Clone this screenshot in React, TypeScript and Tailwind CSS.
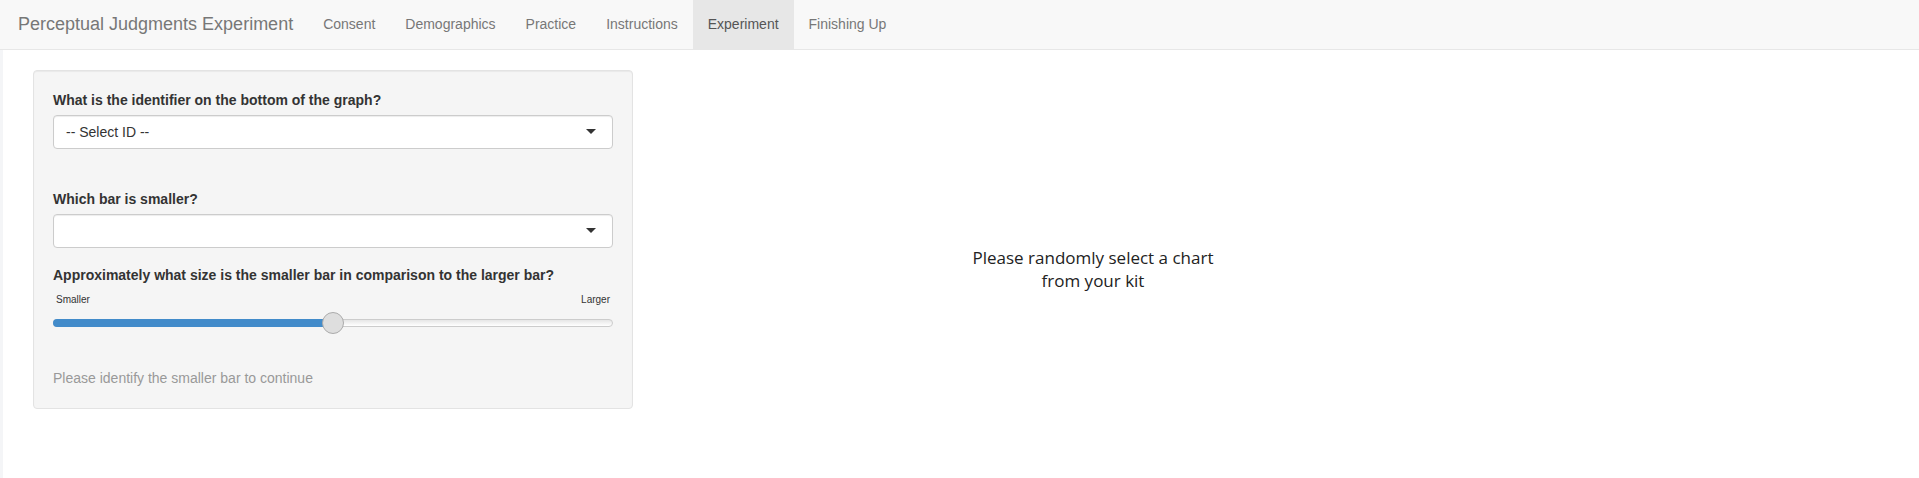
const navItems = ['Consent', 'Demographics', 'Practice', 'Instructions', 'Experiment', 'Finishing Up']

function SelectBox({ value }: { value?: string }) {
    return (
        <div className="relative flex h-[34px] w-full items-center rounded-[4px] border border-[#cccccc] bg-white pl-[12px] text-[14px] text-[#333333] shadow-[inset_0_1px_1px_rgba(0,0,0,0.075)]">
            <span>{value}</span>
            <span className="absolute right-[16px] top-[13px] h-0 w-0 border-x-[5px] border-t-[5px] border-x-transparent border-t-[#333333]"></span>
        </div>
    )
}

export default function App() {
    return (
        <div className="flex min-h-[478px] flex-col bg-white font-['Liberation_Sans',Arial,sans-serif] text-[14px] text-[#333333]">
            <nav className="flex h-[50px] items-stretch border-b border-[#e7e7e7] bg-[#f8f8f8] pl-[3px]">
                <a className="flex h-[49px] items-center pl-[15px] pr-[15px] text-[18px] text-[#777777]">Perceptual Judgments Experiment</a>
                {navItems.map((item) => (
                    <a
                        key={item}
                        className={
                            item === 'Experiment'
                                ? 'flex h-[49px] items-center bg-[#e7e7e7] px-[15px] text-[#555555]'
                                : 'flex h-[49px] items-center px-[15px] text-[#777777]'
                        }
                    >
                        {item}
                    </a>
                ))}
            </nav>
            <div className="flex flex-1">
                <div className="w-[3px] bg-[#f4f5f7]"></div>
                <div className="flex flex-1 items-start pl-[30px] pt-[20px]">
                    <div className="w-[600px] rounded-[4px] border border-[#e3e3e3] bg-[#f5f5f5] px-[19px] pb-[20px] pt-[19px] shadow-[inset_0_1px_1px_rgba(0,0,0,0.05)]">
                        <label className="mb-[5px] block font-bold leading-[20px]">What is the identifier on the bottom of the graph?</label>
                        <SelectBox value="-- Select ID --" />
                        <label className="mb-[5px] mt-[40px] block font-bold leading-[20px]">Which bar is smaller?</label>
                        <SelectBox />
                        <label className="mt-[17px] block font-bold leading-[20px]">Approximately what size is the smaller bar in comparison to the larger bar?</label>
                        <div className="mt-[8px] flex justify-between px-[3px] text-[10px] leading-[14px] text-[#333333]">
                            <span>Smaller</span>
                            <span>Larger</span>
                        </div>
                        <div className="relative mt-[12px] h-[8px] w-full rounded-[8px] border border-[#cccccc] bg-gradient-to-b from-[#e6e6e6] to-[#ffffff]">
                            <div className="absolute left-[-1px] top-[-1px] h-[8px] w-1/2 rounded-l-[8px] bg-[#428bca]"></div>
                            <div className="absolute left-1/2 top-[-8px] h-[22px] w-[22px] -translate-x-1/2 rounded-full border border-[#ababab] bg-[#dedede]"></div>
                        </div>
                        <p className="mt-[41px] leading-[20px] text-[#999999]">Please identify the smaller bar to continue</p>
                    </div>
                    <div className="w-[860px] pl-[60px] pt-[176px] text-center font-['Open_Sans',sans-serif] text-[17px] leading-[23px] text-[#222222]">
                        Please randomly select a chart
                        <br />
                        from your kit
                    </div>
                </div>
            </div>
        </div>
    )
}
